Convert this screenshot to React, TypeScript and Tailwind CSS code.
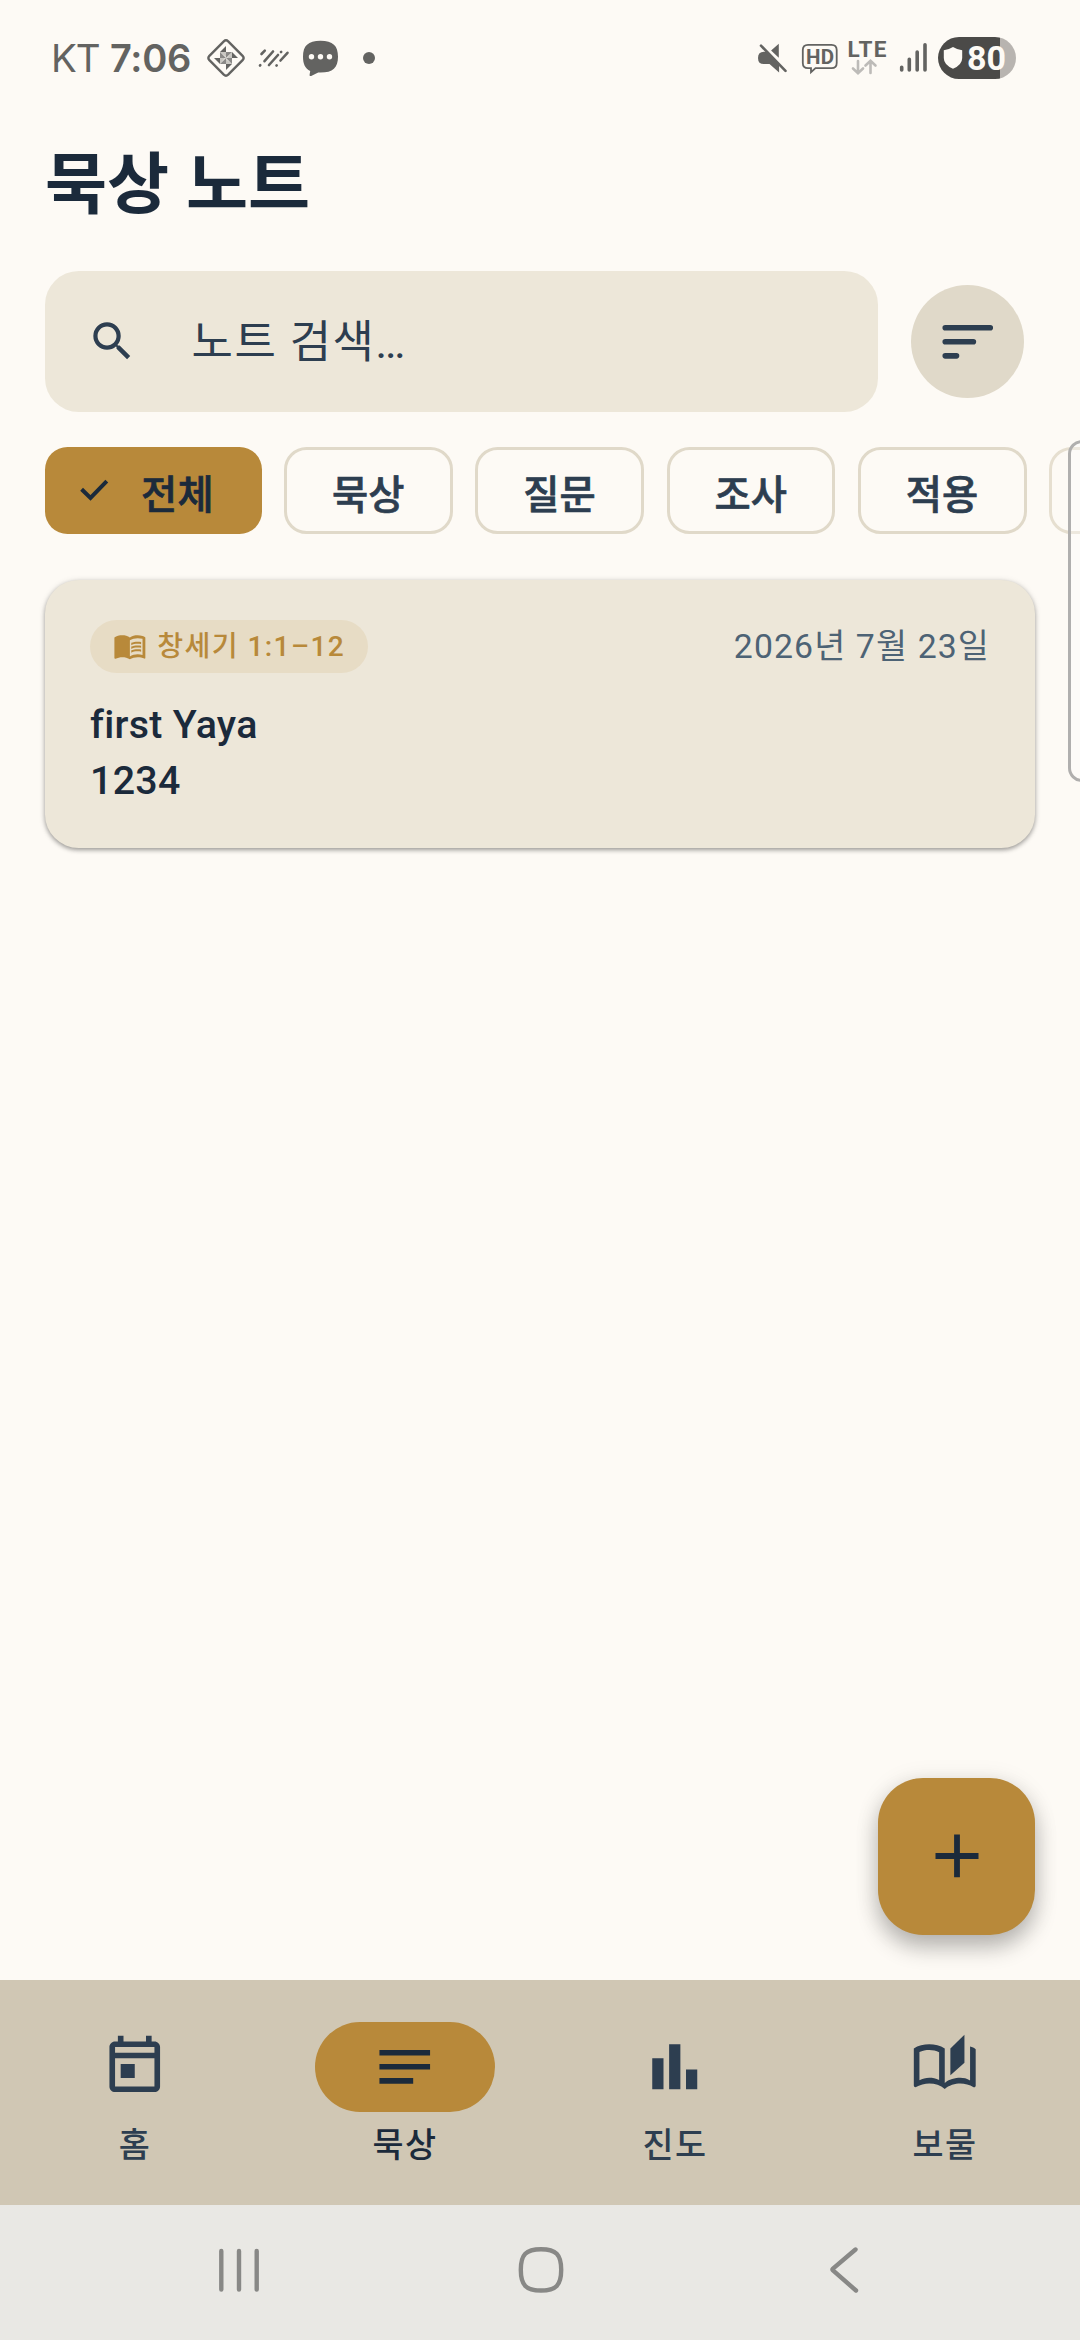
import React from 'react';
import { MdBarChart, MdMenuBook, MdNotes, MdSearch } from 'react-icons/md';

const chips = ['묵상', '질문', '조사', '적용'];

const TodayIcon = () => (
    <svg viewBox="0 0 24 24" className="size-[67.5px]" fill="currentColor">
        <path d="M19 3h-1V1h-2v2H8V1H6v2H5c-1.1 0-2 .9-2 2v14c0 1.1.9 2 2 2h14c1.1 0 2-.9 2-2V5c0-1.1-.9-2-2-2zm0 16H5V9h14v10zm0-12H5V5h14v2zM7 11h5v5H7z" />
    </svg>
);

const StoriesIcon = () => (
    <svg viewBox="0 0 24 24" className="size-[67.5px]" fill="currentColor">
        <path
            fillRule="evenodd"
            d="M12 5.5C10.45 4.5 8.4 4 6.5 4S2.45 4.4 1 5.5v13.2c0 .4.3.6.6.6C3.1 18.4 5 17.95 6.5 17.95c1.95 0 4.05.65 5.5 1.95 1.35-1.3 3.8-1.95 5.5-1.95 1.65 0 3.35.4 4.75 1.3.4.15.75-.1.75-.5V5.8c-.5-.5-1.2-.85-2-1v12.1c-1.1-.7-2.3-.95-3.5-.95-1.7 0-4.15.6-5.5 1.8zM10 16.7c-1.1-.6-2.4-.8-3.5-.8-1.2 0-2.5.3-3.5.9V6.75C4 6.2 5.3 6 6.5 6s2.5.25 3.5.8z"
        />
        <path d="M14 5.5l5-4.900v10l-5 4.400z" />
    </svg>
);

const tabs = [
    { label: '홈', icon: <TodayIcon />, active: false },
    { label: '묵상', icon: <MdNotes className="size-[67.5px]" />, active: true },
    { label: '진도', icon: <MdBarChart className="size-[67.5px]" />, active: false },
    { label: '보물', icon: <StoriesIcon />, active: false },
];

const StatusBar = () => {
    return (
        <div className="flex h-[116px] items-center justify-between pl-[51px] pr-[64px] text-[#636361]">
            <div className="flex h-full items-center">
                <span className="w-[59px] font-['Inter'] text-[38.5px] leading-none tracking-[-1px]">KT</span>
                <span className="w-[96px] font-['Inter'] text-[38px] font-semibold leading-none tracking-[-0.3px]">7:06</span>
                <svg width="40" height="40" viewBox="-20 -20 40 40" fill="none" stroke="currentColor">
                    <path d="M-2.2-16.7q2.200-2 4.400 0L16.600-2.200q2 2.200 0 4.400L2.200 16.700q-2.200 2-4.400 0L-16.600 2.200q-2-2.200 0-4.400z" strokeWidth="2.400" />
                    {[0, 90, 180, 270].map((deg) => (
                        <g key={deg} transform={`rotate(${deg})`} fill="currentColor" stroke="none">
                            <path d="M0-12v6h-6z" />
                            <path d="M0-6h6L0 0z" fillOpacity=".75" />
                            <path d="M6-6v6H1z" fillOpacity=".35" />
                        </g>
                    ))}
                </svg>
                <svg className="ml-[11px]" width="34" height="24" viewBox="257 47 34 24" fill="none" stroke="currentColor" strokeWidth="2.6" strokeLinecap="round">
                    <path d="M261.500 55l3.300-3.300M260 66.500l.3-.3M264.500 62.200l8.500-9.700M269 66l9-10M281 53l.2-.2M276.500 66.500l.2-.2M280.500 61.500l7-7.700" />
                </svg>
                <svg className="ml-[11px]" width="38" height="40" viewBox="302 38 38 40">
                    <path d="M320.500 40.700c12.500 0 17.500 5 17.500 16s-5 15.800-17.500 15.800h-2.300l-7 3.400q-2 .6-1.600-1.200l.6-3.800c-5-2.400-7.200-7-7.200-14.200 0-11 5-16 17.500-16z" fill="currentColor" />
                    <g fill="#fdfaf5">
                        <circle cx="311.500" cy="56.700" r="2.700" />
                        <circle cx="320.500" cy="56.700" r="2.700" />
                        <circle cx="329.500" cy="56.700" r="2.700" />
                    </g>
                </svg>
                <span className="ml-[23px] size-3 rounded-full bg-[#636361]" />
            </div>
            <div className="flex h-full items-center">
                <svg width="32" height="34" viewBox="757 41 32 34">
                    <path d="M778.800 43.800v14l-7.700-7.400zM764 51.700h2.500l12.600 13v7.700l-9.600-8.300H764q-6 0-6-6.200t6-6.200z" fill="currentColor" />
                    <path d="M761 45.700l24.500 25.200" stroke="currentColor" strokeWidth="2.600" strokeLinecap="round" />
                </svg>
                <svg className="ml-3" width="38" height="34" viewBox="801 41 38 34" fill="none">
                    <path d="M808 44.800h23.500q5.200 0 5.200 5.200v13q0 5.200-5.200 5.200h-16l-4.500 4v-4h-3q-5.200 0-5.200-5.200V50q0-5.200 5.200-5.200z" stroke="currentColor" strokeWidth="1.800" />
                    <text x="806" y="63.800" fontSize="20.500" fontWeight="700" fontFamily="Roboto" fill="currentColor" textLength="28">HD</text>
                </svg>
                <svg className="ml-[7px]" width="42" height="50" viewBox="846 33 42 50" fill="none">
                    <text x="847.500" y="57" fontSize="22.500" fontWeight="700" fontFamily="Roboto" fill="currentColor" textLength="39">LTE</text>
                    <path d="M858 61v12M853 68.500l5 4.700 5-4.700M870.500 73V61.500M865.500 65.500l5-4.700 5 4.700" stroke="#bdbbb8" strokeWidth="2.600" strokeLinecap="round" />
                </svg>
                <svg className="ml-[10px]" width="32" height="34" viewBox="898 41 32 34" stroke="currentColor" strokeWidth="3.600" strokeLinecap="round">
                    <path d="M901.700 67.300v2.700M909.300 59.200V70M917.200 52V70M925 44.800V70" />
                </svg>
                <div className="ml-2 flex h-[42px] w-[78px] items-center gap-1 rounded-full bg-[linear-gradient(90deg,#4b4a48_62px,#b8b4b0_62px)] pl-[5px]">
                    <svg width="20" height="22" viewBox="0 0 20 22">
                        <path d="M10 0q4.500 2.800 9.200 3.300V11q0 6.800-9.200 10.800Q.8 17.800.8 11V3.300Q5.500 2.800 10 0z" fill="#fdfaf5" />
                    </svg>
                    <span className="font-['Roboto'] text-[34px] font-bold leading-none text-[#fdfaf5]">80</span>
                </div>
            </div>
        </div>
    );
};

const NoteCard = () => {
    return (
        <div className="mx-[45px] mt-[46px] flex h-[268px] flex-col rounded-[33.75px] bg-[#ede7d9] px-[45px] pt-10 shadow-[0_2px_4px_rgba(0,0,0,0.32),0_1px_7px_rgba(0,0,0,0.12)]">
            <div className="flex h-[53px] items-center justify-between">
                <div className="flex h-[53px] w-[278px] items-center rounded-full bg-[#e7dcc5] pl-[22.5px] text-[#b8893a]">
                    <MdMenuBook className="size-[33.75px]" />
                    <span className="ml-[11px] whitespace-nowrap text-[28.125px] font-medium leading-[45px] tracking-[1.4px]">창세기 1:1–12</span>
                </div>
                <span className="text-[33.75px] leading-[45px] tracking-[1.125px] text-[#4d6375]">2026년 7월 23일</span>
            </div>
            <div className="mt-6 text-[39.375px] font-medium leading-[56.25px] tracking-[0.28px] text-[#1b2a3b]">
                <p>first Yaya</p>
                <p>1234</p>
            </div>
        </div>
    );
};

const BottomNav = () => {
    return (
        <nav className="flex h-[225px] bg-[#d0c7b4]">
            {tabs.map((tab) => (
                <div key={tab.label} className={`flex flex-1 flex-col items-center pt-[42px] ${tab.active ? 'text-[#1b2a3b]' : 'text-[#2d3e50]'}`}>
                    <div className={`flex h-[90px] w-[180px] items-center justify-center rounded-full ${tab.active ? 'bg-[#b8893a]' : ''}`}>
                        {tab.icon}
                    </div>
                    <span className="mt-[11px] text-[33.75px] font-medium leading-[45px] tracking-[1.4px]">{tab.label}</span>
                </div>
            ))}
        </nav>
    );
};

const SystemBar = () => {
    return (
        <div className="flex h-[135px] items-center bg-[#e9e8e4] pb-[6px] pl-[214px] text-[#888886]">
            <svg width="50" height="54" viewBox="214 2243 50 54" stroke="currentColor" strokeWidth="4.400" strokeLinecap="round">
                <path d="M221.300 2251v38.500M239 2251v38.500M256.700 2251v38.500" />
            </svg>
            <svg className="ml-[250px]" width="54" height="54" viewBox="514 2243 54 54" fill="none" stroke="currentColor" strokeWidth="4.400">
                <path d="M541 2249.200c15 0 20.200 5.200 20.200 20.600s-5.200 20.700-20.200 20.700-20.200-5.300-20.200-20.700 5.200-20.600 20.200-20.600z" />
            </svg>
            <svg className="ml-[257px]" width="40" height="54" viewBox="825 2243 40 54" fill="none" stroke="currentColor" strokeWidth="4.400" strokeLinecap="round">
                <path d="M855.500 2249.500L833 2268.500q-1 1 0 2L856 2290.500" />
            </svg>
        </div>
    );
};

const App = () => {
    return (
        <div className="relative flex h-[2340px] w-[1080px] flex-col overflow-hidden bg-[#fdfaf5] font-['Roboto','Noto_Sans_CJK_KR',sans-serif]">
            <StatusBar />
            <h1 className="ml-[45px] mt-6 text-[67.5px] font-bold leading-[90px] text-[#1b2a3b]">묵상 노트</h1>
            <div className="mt-[41px] flex items-center pl-[45px]">
                <div className="flex h-[140.6px] w-[832.5px] items-center rounded-[33.75px] bg-[#ede7d9] pl-[42px] text-[#2d3e50]">
                    <MdSearch className="size-[50.6px]" />
                    <span className="ml-[54px] pt-0.5 text-[45px] leading-[67.5px] tracking-[1.4px]">노트 검색…</span>
                </div>
                <button className="ml-[33.75px] flex size-[112.5px] items-center justify-center rounded-full bg-[#e0d9c9]">
                    <svg viewBox="0 0 24 24" className="size-[67.5px]" stroke="#2d3e50" strokeWidth="2" strokeLinecap="round">
                        <path d="M4 7h16M4 12h10M4 17h4" />
                    </svg>
                </button>
            </div>
            <div className="mt-[35px] flex h-[87.2px] gap-[22.5px] pl-[45px]">
                <div className="flex w-[216.5px] shrink-0 items-center rounded-[22.5px] bg-[#b8893a] pl-[35px] text-[#1b2a3b]">
                    <svg width="29" height="22" viewBox="0 0 29 22" fill="none" stroke="currentColor" strokeWidth="4">
                        <path d="M1.600 10.200l8.900 8.700L26.800 2.200" />
                    </svg>
                    <span className="ml-[32px] pt-[11px] text-[39.375px] font-medium leading-[56.25px] tracking-[0.28px] [-webkit-text-stroke:0.7px_currentColor]">전체</span>
                </div>
                {chips.map((chip) => (
                    <div key={chip} className="flex w-[168.75px] shrink-0 items-center justify-center rounded-[22.5px] border-3 border-[#e0d9c9] pt-[11px] text-[39.375px] font-medium leading-[56.25px] tracking-[0.28px] text-[#2d3e50] [-webkit-text-stroke:0.7px_currentColor]">
                        {chip}
                    </div>
                ))}
                <div className="w-[168.75px] shrink-0 rounded-[22.5px] border-3 border-[#e6dfd0]" />
            </div>
            <NoteCard />
            <div className="flex-1" />
            <BottomNav />
            <SystemBar />

            {/* floating add button */}
            <button className="absolute bottom-[405px] right-[45px] flex size-[157.5px] items-center justify-center rounded-[45px] bg-[#b8893a] pl-[2px] shadow-[0_13px_22px_rgba(0,0,0,0.24),0_3px_24px_rgba(0,0,0,0.1)]">
                <svg width="44" height="44" viewBox="0 0 44 44" stroke="#1b2a3b" strokeWidth="5.800">
                    <path d="M22 .6v42.600M.5 22h43" />
                </svg>
            </button>
            {/* edge panel handle */}
            <div className="absolute -right-5 top-[440px] h-[342px] w-[32px] rounded-[14px] border-3 border-[#b0afae] bg-white/30" />
        </div>
    );
};

export default App;
